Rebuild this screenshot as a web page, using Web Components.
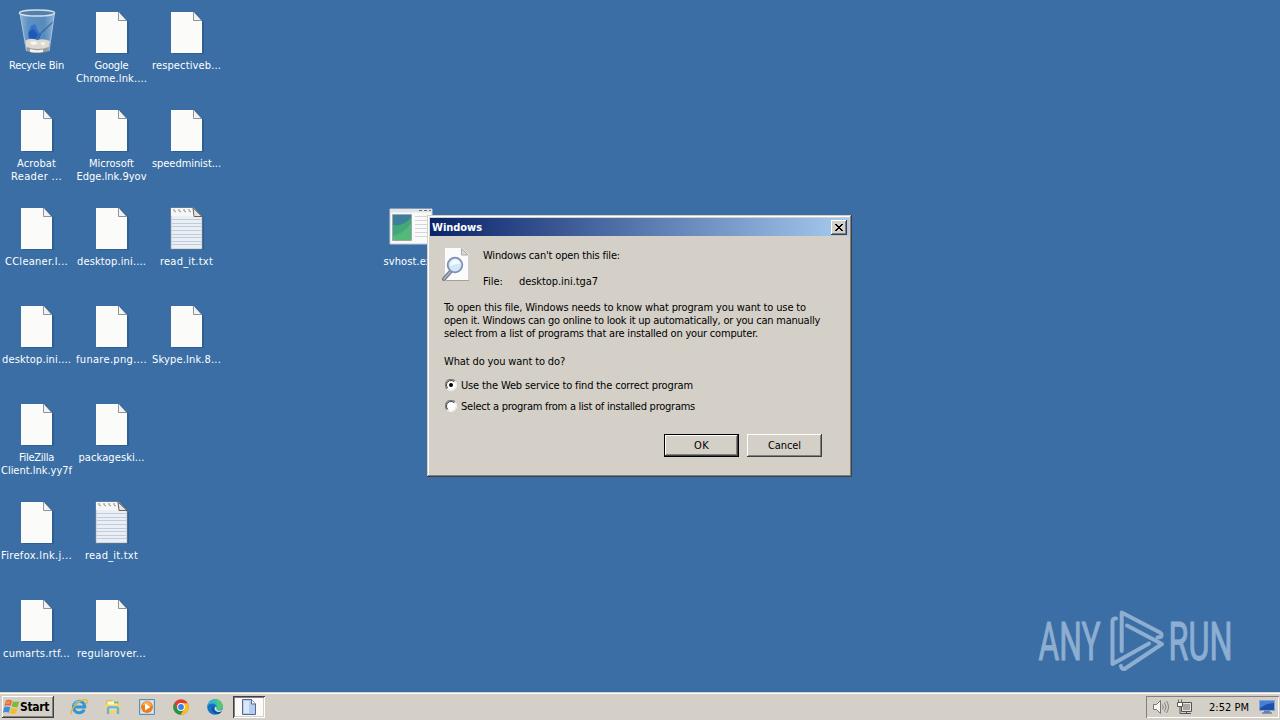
<!DOCTYPE html>
<html lang="en">
<head>
<meta charset="utf-8">
<title>Desktop</title>
<style>
html, body {
    margin: 0;
    height: 100%;
    overflow: hidden;
}
body {
    background: #3a6ea5;
    font: 11px/13px "DejaVu Sans Condensed", "DejaVu Sans", sans-serif;
    color: #000;
}
</style>
</head>
<body>
<win-desktop></win-desktop>

<script>
const ICONS = {
    file: `<svg width="36" height="44" viewBox="0 0 36 44">
        <path d="M3 3h24l8 9v32H4z" fill="#234f80" opacity=".5"/>
        <path d="M2 2h23l8 9v32H2z" fill="#fbfbfa"/>
        <path d="M24.500 2v8.500h8" fill="#f2f2f2" stroke="#8d959b"/>
        <path d="M25.500 2.500l7.500 8" stroke="#51718f" fill="none"/>
    </svg>`,
    text: `<svg width="36" height="44" viewBox="0 0 36 44">
        <path d="M3 3h24l8 9v32H4z" fill="#234f80" opacity=".5"/>
        <path d="M2 2h23l8 9v32H2z" fill="#eaeff6" stroke="#a3a09f" stroke-width=".6"/>
        <path d="M2 2h23v8H2z" fill="#f6f6f6"/>
        <path d="M2.500 13.500h30M2.500 17.500h30M2.500 20.500h30M2.500 24.500h30M2.500 28.500h30M2.500 31.500h30M2.500 35.500h30M2.500 38.500h30" stroke="#c0ccdc"/>
        <path d="M5 3v2l2 1M10 3v2l2 1M15 3v2l2 1M20 3v2l2 1" stroke="#929292" fill="none"/>
        <path d="M24 2l1 8.500h8z" fill="#e6e2dd" stroke="#66625f"/>
    </svg>`,
    bin: `<svg width="40" height="46" viewBox="0 0 40 46">
        <defs><linearGradient id="g"><stop offset="0" stop-color="#9cc0dd"/><stop offset=".25" stop-color="#6497c8"/><stop offset=".7" stop-color="#5b90c3"/><stop offset="1" stop-color="#a4c2dc"/></linearGradient></defs>
        <path d="M2.500 4L9 43q12 4 23.500 0L38 4z" fill="url(#g)" opacity=".85"/>
        <path d="M14 18l4-2 3 7 3 4-3 7-9-3-1-6z" fill="#2467c7" opacity=".75"/>
        <path d="M12 24l4-3 5 6-4 5-5-2z" fill="#1a4db0" opacity=".7"/>
        <path d="M36 14L24 25q-2 3-3 8" fill="none" stroke="#37618e" stroke-width="1.300" opacity=".8"/>
        <path d="M8 33q5-4 12-1 7-2 13 1l-1.500 7q-11 4-22 0z" fill="#dcd9d0"/>
        <path d="M13 34l5-1 3 3-6 1zM23 35l5-1-1 4z" fill="#f7f6f2"/>
        <path d="M9.500 39q11 4 22.500 0l-.5 4q-11 3.500-21.500 0z" fill="#9c9d9b"/>
        <path d="M13 41q6 2 13 .5v2.500q-6 1-13 0z" fill="#f4f1ea"/>
        <ellipse cx="20" cy="5" rx="17.500" ry="3" fill="#527fae" stroke="#d6e0e7" stroke-width="1.500"/>
        <path d="M3 5l6.500 38M37.500 5L32 43" stroke="#b7cfe2" stroke-width="1" opacity=".7"/>
    </svg>`,
    exe: `<svg width="44" height="37" viewBox="0 0 44 37">
        <path d="M1 1h42v35H1z" fill="#fafafa" stroke="#c6cbd0"/>
        <path d="M1 1h42v3.500H1z" fill="#e1e4e6"/>
        <path d="M30 2.500h12" stroke="#66727c" stroke-dasharray="3 2"/>
        <path d="M4 6.500h18.500v25.500H4z" fill="#3d7f9b"/>
        <path d="M4 17q10 2 18.500-8v23H4z" fill="#42a878"/>
        <path d="M4 28q10-2 18.500-13v17H4z" fill="#5cbf7c" opacity=".7"/>
        <path d="M3.500 6.500h19v26h-19z" fill="none" stroke="#9aa7ae"/>
        <path d="M26 8.500h14M26 12.500h14M26 16.500h14M26 20.500h14M26 24.500h14M26 28.500h14" stroke="#d3d6d8"/>
    </svg>`,
    search: `<svg width="30" height="36" viewBox="0 0 30 36">
        <path d="M3 2h17l6 6v25H3z" fill="#87837d" opacity=".6" transform="translate(1 1)"/>
        <path d="M3 1h17l6.500 6.500V33H3z" fill="#fbfbfb"/>
        <path d="M19.500 1.500V8h6.500z" fill="#d8d7d3" stroke="#aaa"/>
        <path d="M9 24l-7 8" stroke="#6f7c88" stroke-width="4" stroke-linecap="round"/>
        <path d="M9 24l-7 8" stroke="#aeb9c3" stroke-width="1.500" stroke-linecap="round"/>
        <circle cx="13" cy="18" r="7.300" fill="#d3e7fa" stroke="#7c92ae" stroke-width="1.800"/>
        <path d="M8 19q0-6 6-6.500 4 1 4 4-5 0-10 2.500z" fill="#f3faff"/>
    </svg>`,
    flag: `<svg width="17" height="16" viewBox="0 0 17 16">
        <path d="M3 1.500q3-1.500 6 .2L7.500 7Q5 5.600 1.500 7z" fill="#e8642a"/>
        <path d="M9.900 2.200q3 1.300 6.400 0L14.700 8q-3 1-6.200-.7z" fill="#7fb93c"/>
        <path d="M1.300 8q3.200-1.300 6 .2L5.800 13.800Q3.200 12.400 0 13.500z" fill="#3a8fd9"/>
        <path d="M8.200 8.700q3 1.500 6.300.3L13 14.500q-3 1.100-6.300-.3z" fill="#f5bd2b"/>
        <path d="M3.500 2.500q2-1 4-.2l-1 2.500Q5 4.500 3 5z" fill="#f9a36a" opacity=".7"/>
    </svg>`,
    ie: `<svg width="18" height="18" viewBox="0 0 18 18">
        <path d="M14.200 11.600a5.700 5.700 0 1 1 .6-2.600H5" fill="none" stroke="#2f97d6" stroke-width="2.900"/>
        <path d="M4 7q2-4.200 6-4" fill="none" stroke="#86d2f6" stroke-width="1.200"/>
        <path d="M1.500 16.200Q-.5 13 6 6.800T16.500 1.800q1.500 1.700-.8 5" fill="none" stroke="#e4b53a" stroke-width="1.400"/>
    </svg>`,
    explorer: `<svg width="18" height="18" viewBox="0 0 18 18">
        <path d="M2 3l1-1h5l1 1.500h6V15H2z" fill="#e4bf58"/>
        <path d="M3.500 3.500h10v4h-10z" fill="#fdf8d8"/>
        <path d="M10 3.500h4v2h-4z" fill="#6dbd6a"/>
        <path d="M1 6.500h15.500L16 15H2z" fill="#f3d473"/>
        <path d="M4 16v-5q0-1.500 1.500-1.500h7Q14 9.500 14 11v5" fill="none" stroke="#64b2dd" stroke-width="2.400"/>
        <path d="M5.500 11h7" stroke="#c7e9f7"/>
    </svg>`,
    player: `<svg width="18" height="18" viewBox="0 0 18 18">
        <path d="M1.500 1.500h15v15h-15z" fill="#b9d8ee" stroke="#5b8db5"/>
        <path d="M3 3h12v12H3z" fill="#dbe9f2"/>
        <circle cx="9" cy="9" r="6" fill="#ef7d15"/>
        <path d="M4.200 7Q6 3.500 9 3.600T14 8z" fill="#faad54"/>
        <path d="M7 5.500l5.500 3.500L7 12.500z" fill="#fff"/>
    </svg>`,
    chrome: `<svg width="18" height="18" viewBox="0 0 18 18">
        <circle cx="9" cy="9" r="7.700" fill="#e33b2e"/>
        <path d="M2.300 5.200A7.700 7.700 0 0 0 8.500 16.700L12.300 11 9 9 5.700 11z" fill="#23964a"/>
        <path d="M8.500 16.700A7.700 7.700 0 0 0 15.700 5.200H9l3.400 5.700z" fill="#fbc11b"/>
        <circle cx="9" cy="9" r="3.900" fill="#fff"/>
        <circle cx="9" cy="9" r="2.900" fill="#3f7fe0"/>
    </svg>`,
    edge: `<svg width="18" height="18" viewBox="0 0 18 18">
        <circle cx="9" cy="9" r="7.800" fill="#1670c4"/>
        <path d="M1.300 8A7.800 7.800 0 0 1 16.800 8.500q0 3.500-4 3.500-3 0-2.300-1.700Q11.500 8 8.500 6 4.500 4.500 1.300 8z" fill="#35b8c4"/>
        <path d="M8 1.300q7.500-.3 8.800 6.700 0 4-4 4-3 0-2.300-1.700Q13 5 8 1.300z" fill="#57c871"/>
        <path d="M8.200 7.500q-2 3.500 1.300 5.500 3 1.600 6-.2l.8-.3q-1.500 2.500-3.500 3.500-6 0-7-4Q5.500 8.500 8.200 7.500z" fill="#10539c"/>
        <path d="M10.500 10.300q-.6 2 2.300 2.300 1.500.1 3.500-.9l-.8 1.600q-3 1.300-5.200 0Q7.500 11.500 9.500 8.500q1.300.4 1 1.800z" fill="#d4e9ef"/>
    </svg>`,
    page: `<svg width="16" height="18" viewBox="0 0 16 18">
        <path d="M1.500 1.500h9L14.500 6v10.500h-13z" fill="#b4cdf0" stroke="#54698c"/>
        <path d="M3 3h5v12H3z" fill="#dbe8fa"/>
        <path d="M10.500 1.500V6h4" fill="#f4f8fd" stroke="#54698c"/>
    </svg>`,
    sound: `<svg width="18" height="16" viewBox="0 0 18 16">
        <path d="M1.500 5.500h3l4-4v13l-4-4h-3z" fill="#f6f6f5" stroke="#77736e"/>
        <path d="M10.500 5.500q1.500 2.500 0 5M12.500 3.500q3 4.500 0 9M14.500 2q4 6 0 12" fill="none" stroke="#85817c"/>
    </svg>`,
    network: `<svg width="17" height="16" viewBox="0 0 17 16">
        <path d="M5.500 3.500h10v9h-10z" fill="#e4e2de" stroke="#55534f"/>
        <path d="M7 5h7v6H7z" fill="#a9a8a5"/>
        <path d="M8 14.500h7M10.500 12v2" stroke="#55534f"/>
        <path d="M2.500.5v3M5.500.5v3" stroke="#6b6864"/>
        <path d="M1.500 3.500h5v4h-5z" fill="#fff" stroke="#5b5955"/>
        <path d="M4 8v6.500h4" fill="none" stroke="#5b5955"/>
    </svg>`,
    monitor: `<svg width="16" height="14" viewBox="0 0 16 14">
        <path d="M.500.500h15v10H.500z" fill="#1d50ac" stroke="#88a3c9"/>
        <path d="M1 1h14v2Q8 3 1 8z" fill="#4680d6"/>
        <path d="M5 11.500h6M3 13h10" stroke="#6581a8" stroke-width="1.300"/>
    </svg>`,
    close: `<svg width="8" height="7" viewBox="0 0 8 7" shape-rendering="crispEdges">
        <path d="M0 0h2v1h1v1h2V1h1V0h2v1H7v1H6v1H5v1h1v1h1v1h1v1H6V6H5V5H3v1H2v1H0V6h1V5h1V4h1V3H2V2H1V1H0z"/>
    </svg>`
};

// Single line of text, tracked so that it fills the width given in pixels.
class FitText extends HTMLElement {
    constructor() {
        super();
        this.attachShadow({ mode: 'open' });
        this.shadowRoot.innerHTML = `
        <style>
        :host{
            display:block;
            white-space:nowrap;
            width:max-content;
        }
        span{
            display:block;
            width:max-content;
        }
        </style>
        <span><slot></slot></span>
        `;
    }
    connectedCallback() {
        const w = Number(this.getAttribute('w'));
        const span = this.shadowRoot.querySelector('span');
        const count = this.textContent.length;
        if (!w || !count) return;
        const gap = (w - span.getBoundingClientRect().width) / count;
        span.style.letterSpacing = gap.toFixed(3) + 'px';
    }
}

class UiIcon extends HTMLElement {
    constructor() {
        super();
        this.attachShadow({ mode: 'open' });
    }
    connectedCallback() {
        this.shadowRoot.innerHTML = `
        <style>
        :host{
            display:flex;
            flex:none;
        }
        svg{
            display:block;
        }
        </style>
        ${ICONS[this.getAttribute('name')]}
        `;
    }
}

class DesktopIcon extends HTMLElement {
    constructor() {
        super();
        this.attachShadow({ mode: 'open' });
    }
    connectedCallback() {
        this.shadowRoot.innerHTML = `
        <style>
        :host{
            display:flex;
            flex-direction:column;
            align-items:center;
            gap:var(--label-gap, 5px);
            width:75px;
            height:98px;
            color:#fff;
        }
        .picture{
            display:flex;
            align-items:flex-end;
            height:46px;
        }
        .label{
            display:flex;
            flex-direction:column;
            align-items:center;
        }
        </style>
        <div class="picture"><ui-icon name="${this.getAttribute('icon')}"></ui-icon></div>
        <div class="label"><slot></slot></div>
        `;
    }
}

class WinButton extends HTMLElement {
    constructor() {
        super();
        this.attachShadow({ mode: 'open' });
        this.shadowRoot.innerHTML = `
        <style>
        :host{
            display:flex;
            align-items:center;
            justify-content:center;
            box-sizing:border-box;
            width:75px;
            height:23px;
            background:#d4d0c8;
            box-shadow:inset -1px -1px #404040, inset 1px 1px #fff, inset -2px -2px #808080;
        }
        :host([default]){
            border:1px solid #000;
        }
        :host([small]){
            width:16px;
            height:15px;
        }
        </style>
        <slot></slot>
        `;
    }
}

class WinRadio extends HTMLElement {
    constructor() {
        super();
        this.attachShadow({ mode: 'open' });
        this.shadowRoot.innerHTML = `
        <style>
        :host{
            display:flex;
            align-items:center;
            gap:4px;
            height:21px;
        }
        svg{
            display:block;
            margin-top:-2px;
        }
        .dot{
            display:none;
        }
        :host([checked]) .dot{
            display:block;
        }
        </style>
        <svg width="12" height="12" viewBox="0 0 12 12">
            <circle cx="6" cy="6" r="5" fill="#fff"/>
            <path d="M2 10A5.500 5.500 0 0 1 10 2" fill="none" stroke="#808080" stroke-width="1.200"/>
            <path d="M2.800 9.200A4.500 4.500 0 0 1 9.200 2.800" fill="none" stroke="#404040"/>
            <path d="M2 10A5.500 5.500 0 0 0 10 2" fill="none" stroke="#f4f2ee"/>
            <circle class="dot" cx="6" cy="6" r="2"/>
        </svg>
        <slot></slot>
        `;
    }
}

class WinDialog extends HTMLElement {
    constructor() {
        super();
        this.attachShadow({ mode: 'open' });
        this.shadowRoot.innerHTML = `
        <style>
        :host{
            display:flex;
            flex-direction:column;
            box-sizing:border-box;
            width:425px;
            height:262px;
            padding:3px;
            background:#d4d0c8;
            box-shadow:inset -1px -1px #404040, inset 1px 1px #d4d0c8, inset -2px -2px #808080, inset 2px 2px #fff;
        }
        header{
            display:flex;
            align-items:center;
            justify-content:space-between;
            height:18px;
            padding:0 2px 0 2px;
            background:linear-gradient(90deg, #0a246a, #a6caf0);
            color:#fff;
            font-weight:bold;
        }
        </style>
        <header>
            <slot name="title"></slot>
            <win-button small><ui-icon name="close"></ui-icon></win-button>
        </header>
        <slot></slot>
        `;
    }
}

class OpenWithDialog extends HTMLElement {
    constructor() {
        super();
        this.attachShadow({ mode: 'open' });
        this.shadowRoot.innerHTML = `
        <style>
        :host{
            display:block;
        }
        .intro{
            display:flex;
            gap:11px;
            padding:11px 0 0 12px;
        }
        .names{
            display:flex;
            flex-direction:column;
            gap:13px;
            padding-top:2px;
        }
        .file{
            display:flex;
            gap:16px;
        }
        .body{
            display:flex;
            flex-direction:column;
            padding:13px 0 0 14px;
        }
        .question{
            margin:15px 0 7px;
        }
        .actions{
            display:flex;
            justify-content:flex-end;
            gap:8px;
            padding:17px 27px 0 0;
        }
        win-radio{
            margin-left:1px;
        }
        </style>
        <win-dialog>
            <fit-text slot="title" w="50">Windows</fit-text>
            <div class="intro">
                <ui-icon name="search"></ui-icon>
                <div class="names">
                    <fit-text w="137">Windows can't open this file:</fit-text>
                    <div class="file">
                        <fit-text w="20">File:</fit-text>
                        <fit-text w="79">desktop.ini.tga7</fit-text>
                    </div>
                </div>
            </div>
            <div class="body">
                <fit-text w="362">To open this file, Windows needs to know what program you want to use to</fit-text>
                <fit-text w="376">open it. Windows can go online to look it up automatically, or you can manually</fit-text>
                <fit-text w="314">select from a list of programs that are installed on your computer.</fit-text>
                <div class="question"><fit-text w="121">What do you want to do?</fit-text></div>
                <win-radio checked><fit-text w="232">Use the Web service to find the correct program</fit-text></win-radio>
                <win-radio><fit-text w="234">Select a program from a list of installed programs</fit-text></win-radio>
            </div>
            <div class="actions">
                <win-button default><fit-text w="15">OK</fit-text></win-button>
                <win-button><fit-text w="33">Cancel</fit-text></win-button>
            </div>
        </win-dialog>
        `;
    }
}

class TaskBar extends HTMLElement {
    constructor() {
        super();
        this.attachShadow({ mode: 'open' });
        this.shadowRoot.innerHTML = `
        <style>
        :host{
            display:flex;
            align-items:center;
            box-sizing:border-box;
            height:28px;
            padding:2px 1px 0 2px;
            background:#d4d0c8;
            box-shadow:inset 0 1px #d4d0c8, inset 0 2px #fff;
        }
        .start{
            justify-content:flex-start;
            width:52px;
            height:22px;
            padding-left:1px;
            font-weight:bold;
            font-size:12px;
        }
        .quick{
            display:flex;
            gap:16px;
            margin-left:16px;
        }
        .task{
            display:flex;
            align-items:center;
            justify-content:center;
            box-sizing:border-box;
            width:32px;
            height:22px;
            margin-left:9px;
            background:#fbfaf8;
            box-shadow:inset 1px 1px #404040, inset -1px -1px #fff, inset 2px 2px #808080, inset -2px -2px #d4d0c8;
        }
        .tray{
            display:flex;
            align-items:center;
            box-sizing:border-box;
            width:133px;
            height:22px;
            margin-left:auto;
            padding:0 4px 0 6px;
            box-shadow:inset 1px 1px #808080, inset -1px -1px #fff;
        }
        .tray .network{
            margin-left:6px;
        }
        .tray .clock{
            margin-left:16px;
        }
        .tray .monitor{
            margin-left:auto;
        }
        </style>
        <win-button class="start"><ui-icon name="flag"></ui-icon><fit-text w="29">Start</fit-text></win-button>
        <div class="quick">
            <ui-icon name="ie"></ui-icon>
            <ui-icon name="explorer"></ui-icon>
            <ui-icon name="player"></ui-icon>
            <ui-icon name="chrome"></ui-icon>
            <ui-icon name="edge"></ui-icon>
        </div>
        <div class="task"><ui-icon name="page"></ui-icon></div>
        <div class="tray">
            <ui-icon name="sound"></ui-icon>
            <ui-icon class="network" name="network"></ui-icon>
            <fit-text class="clock" w="40">2:52 PM</fit-text>
            <ui-icon class="monitor" name="monitor"></ui-icon>
        </div>
        `;
    }
}

class AnyRunMark extends HTMLElement {
    constructor() {
        super();
        this.attachShadow({ mode: 'open' });
        this.shadowRoot.innerHTML = `
        <style>
        :host{
            display:block;
            opacity:.8;
        }
        svg{
            display:block;
            overflow:visible;
        }
        text{
            font:53px Roboto, "Liberation Sans", sans-serif;
            fill:#a3bfdd;
            stroke:#a3bfdd;
            stroke-width:1.1;
        }
        path{
            fill:none;
            stroke:#a3bfdd;
            stroke-width:4;
            stroke-linejoin:round;
            stroke-linecap:round;
        }
        </style>
        <svg width="240" height="70" viewBox="1035 605 240 70">
            <text x="1038.500" y="659.500" textLength="62" lengthAdjust="spacingAndGlyphs">ANY</text>
            <text x="1168.500" y="659.500" textLength="64" lengthAdjust="spacingAndGlyphs">RUN</text>
            <path d="M1116 618.500q-3.500-.5-3.500 3V664l36.500-20.500"/>
            <path d="M1121.700 651V612.500l38.300 20q3 2 .5 4.500l-3 .5"/>
            <path d="M1127 625.500l35 18.500-37.500 25q-3 .5-3.500-3"/>
        </svg>
        `;
    }
}

class WinDesktop extends HTMLElement {
    constructor() {
        super();
        this.attachShadow({ mode: 'open' });
        // columns of [icon, [label line, width], ...]
        const columns = [
            [
                ['bin', ['Recycle Bin', 55]],
                ['file', ['Acrobat', 39], ['Reader ...', 51]],
                ['file', ['CCleaner.l...', 63]],
                ['file', ['desktop.ini....', 69]],
                ['file', ['FileZilla', 35], ['Client.lnk.yy7f', 71]],
                ['file', ['Firefox.lnk.j...', 71]],
                ['file', ['cumarts.rtf...', 67]]
            ],
            [
                ['file', ['Google', 34], ['Chrome.lnk....', 71]],
                ['file', ['Microsoft', 45], ['Edge.lnk.9yov', 70]],
                ['file', ['desktop.ini....', 69]],
                ['file', ['funare.png....', 71]],
                ['file', ['packageski...', 66]],
                ['text', ['read_it.txt', 53]],
                ['file', ['regularover...', 69]]
            ],
            [
                ['file', ['respectiveb...', 69]],
                ['file', ['speedminist...', 69]],
                ['text', ['read_it.txt', 53]],
                ['file', ['Skype.lnk.8...', 69]]
            ]
        ];
        const icon = ([name, ...lines]) => `<desktop-icon icon="${name}">${lines.map(([text, w]) => `<fit-text w="${w}">${text}</fit-text>`).join('')}</desktop-icon>`;
        this.shadowRoot.innerHTML = `
        <style>
        :host{
            display:flex;
            flex-direction:column;
            height:100vh;
            position:relative;
            cursor:default;
        }
        main{
            flex:1;
            display:flex;
            min-height:0;
            margin-left:-1px;
            padding-top:8px;
        }
        .loose, open-with-dialog, any-run-mark{
            position:absolute;
        }
        .loose{
            left:373px;
            top:199px;
            --label-gap:10px;
        }
        open-with-dialog{
            left:427px;
            top:215px;
        }
        any-run-mark{
            left:1035px;
            top:605px;
        }
        </style>
        <main>
            ${columns.map(c => `<div>${c.map(icon).join('')}</div>`).join('')}
        </main>
        <desktop-icon class="loose" icon="exe"><fit-text w="54">svhost.exe</fit-text></desktop-icon>
        <any-run-mark></any-run-mark>
        <open-with-dialog></open-with-dialog>
        <task-bar></task-bar>
        `;
    }
}

customElements.define('fit-text', FitText);
customElements.define('ui-icon', UiIcon);
customElements.define('desktop-icon', DesktopIcon);
customElements.define('win-button', WinButton);
customElements.define('win-radio', WinRadio);
customElements.define('win-dialog', WinDialog);
customElements.define('open-with-dialog', OpenWithDialog);
customElements.define('task-bar', TaskBar);
customElements.define('any-run-mark', AnyRunMark);
customElements.define('win-desktop', WinDesktop);
</script>
</body>
</html>
